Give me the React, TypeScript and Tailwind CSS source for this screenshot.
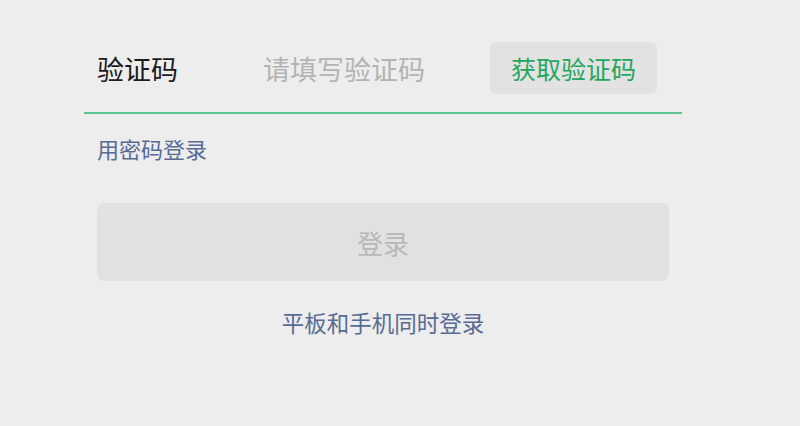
import React from "react";

export default function App() {
  return (
    <div
      className="w-[800px] h-[426px] bg-[#ededed] pt-[42px] pl-[84px]"
      style={{ fontFamily: '"Noto Sans CJK SC", "Noto Sans", sans-serif' }}
    >
      <div className="w-[598px]">
        <div className="flex items-center h-[52px] pr-[25px] box-content pb-[18px] border-b-2 border-[#5cc28f]">
          <div className="w-[179px] pl-[13px] text-[27px] leading-none text-[#1b1b1b]">验证码</div>
          <div className="flex-1 text-[27px] leading-none text-[#b3b3b3]">请填写验证码</div>
          <button className="h-[52px] w-[167px] rounded-[6px] bg-[#e2e2e2] text-[25px] leading-none text-[#25a65f]">
            获取验证码
          </button>
        </div>
        <div className="pl-[13px] pt-[19px] text-[22px] leading-[30px] text-[#576b95]">用密码登录</div>
        <div className="pl-[13px] pt-[40px]">
          <div className="w-[572px] h-[78px] rounded-[8px] bg-[#e1e1e1] flex items-center justify-center text-[26px] text-[#b8b8b8]">
            登录
          </div>
          <div className="w-[572px] flex justify-center pt-[26px] text-[22.5px] leading-[30px] text-[#576b95]">
            平板和手机同时登录
          </div>
        </div>
      </div>
    </div>
  );
}
